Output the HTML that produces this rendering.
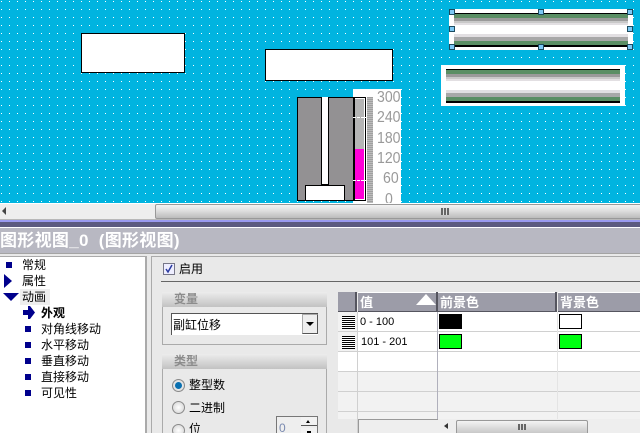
<!DOCTYPE html>
<html><head><meta charset="utf-8">
<style>
html,body{margin:0;padding:0;width:640px;height:433px;overflow:hidden;background:#e9e9e9}
body{position:relative;font-family:"Liberation Sans","WenQuanYi Zen Hei","Noto Sans CJK SC",sans-serif;font-size:12px;color:#000}
div,span,svg{position:absolute;box-sizing:border-box}
.t{white-space:nowrap;line-height:14px;font-size:12px}
.r{background:#fff;border:1px solid #000}
.h{width:6px;height:6px;background:#7cc8f4;border:1px solid #1c4c60}
.b{width:6px;height:6px;background:#00008c}
.gh{background:linear-gradient(#ececec,#c2c2c2);height:15px}
.gt{color:#8c8c8c;font-weight:bold;font-size:12px;line-height:15px;white-space:nowrap}
.th{background:#9c9ca8;color:#fff;font-weight:bold;font-size:13px;line-height:19px;height:20px;top:292px;white-space:nowrap;border-top:1px solid #fff;border-bottom:1px solid #55555f;padding-left:2px}
.sw{width:23px;height:15px;border:1px solid #000}
.rl{left:338px;width:302px;height:1px;background:#d0d0d0}
.ln{left:342px;width:13px;height:13px;background:repeating-linear-gradient(#000 0 1px,#fff 1px 2px)}
.rad{width:13px;height:13px;border-radius:50%;border:1px solid #8a8a8a;background:radial-gradient(#fff,#d0d0d0);left:172px}
.g{transform:scaleX(.88);transform-origin:left top}
</style></head><body>

<svg style="left:0;top:0" width="640" height="203">
<defs><pattern id="p" width="8" height="8" patternUnits="userSpaceOnUse" x="1" y="1"><rect width="1" height="1" fill="#fff"/></pattern></defs>
<rect width="640" height="203" fill="#00b4e0"/>
<rect width="640" height="203" fill="url(#p)"/>
</svg>

<div class="r" style="left:81px;top:33px;width:104px;height:40px"></div>
<div class="r" style="left:265px;top:49px;width:128px;height:32px"></div>

<div style="left:297px;top:97px;width:57px;height:104px;background:#939193;border:1px solid #000"></div>
<div style="left:321px;top:97px;width:8px;height:88px;background:#fff;border:1px solid #000;border-top:0"></div>
<div class="r" style="left:305px;top:185px;width:40px;height:16px"></div>

<div style="left:353px;top:89px;width:48px;height:114px;background:#fff"></div>
<div style="left:353px;top:97px;width:13px;height:104px;background:#fff;border:1px solid #000;border-left:2px solid #000"></div>
<div style="left:355px;top:99px;width:9px;height:50px;background:#b5b5b5"></div>
<div style="left:355px;top:149px;width:9px;height:50px;background:#ff00d8"></div>
<div style="left:353px;top:117px;width:14px;height:1px;background:repeating-linear-gradient(90deg,#fff 0 3px,transparent 3px 4px)"></div>
<div style="left:353px;top:180px;width:14px;height:1px;background:repeating-linear-gradient(90deg,#fff 0 3px,transparent 3px 4px)"></div>
<div style="left:367px;top:97px;width:6px;height:106px;background:repeating-linear-gradient(#a0a0a0 0 1px,#bcbcbc 1px 2px)"></div>
<div style="left:374px;top:89px;width:27px;height:114px;overflow:hidden;color:#999;font-size:16px;line-height:18px;font-family:'Liberation Sans',sans-serif">
<span class="g" style="left:3px;top:0">300</span><span class="g" style="left:3px;top:20px">240</span><span class="g" style="left:3px;top:41px">180</span><span class="g" style="left:3px;top:61px">120</span><span class="g" style="left:9px;top:81px">60</span><span class="g" style="left:11px;top:102px">0</span>
</div>

<div style="left:449px;top:9px;width:184px;height:41px;background:#fff"></div>
<div style="left:454px;top:13px;width:174px;height:34px;background:linear-gradient(#000 0 1px,#5a8e64 1px 5px,#9a9a9a 5px 8px,#c8c8c8 8px 10px,#e2dfe2 10px 12px,#fff 12px 21px,#e2dfe2 21px 24px,#a8a8a8 24px 28px,#5a8e64 28px 32px,#000 32px 34px)"></div>
<div class="h" style="left:449px;top:9px"></div><div class="h" style="left:538px;top:9px"></div><div class="h" style="left:627px;top:9px"></div>
<div class="h" style="left:449px;top:26px"></div><div class="h" style="left:627px;top:26px"></div>
<div class="h" style="left:449px;top:44px"></div><div class="h" style="left:538px;top:44px"></div><div class="h" style="left:627px;top:44px"></div>

<div style="left:441px;top:65px;width:184px;height:41px;background:#fff"></div>
<div style="left:446px;top:69px;width:174px;height:34px;background:linear-gradient(#000 0 1px,#5a8e64 1px 5px,#9a9a9a 5px 8px,#c8c8c8 8px 10px,#e2dfe2 10px 12px,#fff 12px 21px,#e2dfe2 21px 24px,#a8a8a8 24px 28px,#5a8e64 28px 32px,#000 32px 34px)"></div>

<div style="left:0;top:203px;width:640px;height:17px;background:#eee;border-top:1px solid #fff"></div>
<div style="left:2px;top:207px;width:0;height:0;border:4px solid transparent;border-right:4px solid #444;border-left:0"></div>
<div style="left:155px;top:204px;width:490px;height:15px;background:linear-gradient(#f4f4f4,#dedede 45%,#bcbcbc);border:1px solid #999;border-radius:2px"></div>
<div style="left:441px;top:208px;width:8px;height:7px;background:repeating-linear-gradient(90deg,#666 0 2px,#ddd 2px 3px)"></div>

<div style="left:0;top:219px;width:640px;height:2px;background:#b8b8b8"></div>
<div style="left:0;top:220px;width:640px;height:2px;background:#9a9af0"></div>
<div style="left:0;top:222px;width:640px;height:5px;background:#5c5a80"></div>
<div style="left:0;top:227px;width:640px;height:1px;background:#fff"></div>
<div style="left:0;top:228px;width:640px;height:26px;background:#b8b8c2;border-bottom:1px solid #a4a4a4"></div>
<div style="left:0;top:232px;font-size:17px;font-weight:bold;line-height:18px;color:#fff;white-space:nowrap;letter-spacing:.3px;word-spacing:5px">图形视图_0 (图形视图)</div>

<div style="left:0;top:256px;width:147px;height:177px;background:#fff;border-top:1px solid #aaa;border-right:2px solid #aaa"></div>
<div style="left:6px;top:262px" class="b"></div>
<div class="t" style="left:22px;top:258px">常规</div>
<div style="left:4px;top:274px;width:0;height:0;border:7px solid transparent;border-left:8px solid #00008c;border-right:0"></div>
<div class="t" style="left:22px;top:274px">属性</div>
<div style="left:3px;top:293px;width:0;height:0;border:7px solid transparent;border-top:8px solid #00008c;border-bottom:0;border-left-width:8px;border-right-width:8px"></div>
<div style="left:20px;top:289px;width:30px;height:16px;background:#eee"></div>
<div class="t" style="left:22px;top:290px">动画</div>
<svg style="left:23px;top:306px" width="12" height="13"><path d="M5 0h2l5 6.5-5 6.5H5V9H0V4h5z" fill="#00008c"/></svg>
<div class="t" style="left:41px;top:306px;font-weight:bold">外观</div>
<div class="b" style="left:25px;top:326px"></div><div class="t" style="left:41px;top:322px">对角线移动</div>
<div class="b" style="left:25px;top:342px"></div><div class="t" style="left:41px;top:338px">水平移动</div>
<div class="b" style="left:25px;top:358px"></div><div class="t" style="left:41px;top:354px">垂直移动</div>
<div class="b" style="left:25px;top:374px"></div><div class="t" style="left:41px;top:370px">直接移动</div>
<div class="b" style="left:25px;top:390px"></div><div class="t" style="left:41px;top:386px">可见性</div>

<div style="left:151px;top:256px;width:489px;height:177px;border-top:1px solid #aaa;border-left:1px solid #aaa;background:#e9e9e9"></div>
<div style="left:163px;top:263px;width:12px;height:12px;background:#eef;border:1px solid #778"></div>
<svg style="left:164px;top:264px" width="10" height="10"><path d="M2 5l2 3 4-7" fill="none" stroke="#2a3aa0" stroke-width="1.5"/></svg>
<div class="t" style="left:179px;top:262px">启用</div>
<div style="left:161px;top:281px;width:479px;height:1px;background:#666"></div>

<div style="left:162px;top:292px;width:165px;height:53px;border:1px solid #aaa;border-top:0"></div>
<div class="gh" style="left:162px;top:292px;width:165px"></div>
<div class="gt" style="left:174px;top:292px">变量</div>
<div style="left:171px;top:313px;width:147px;height:22px;background:#fff;border-left:1px solid #555;border-top:1px solid #555"></div>
<div class="t" style="left:173px;top:318px">副缸位移</div>
<div style="left:302px;top:314px;width:16px;height:20px;background:#eee;border:1px solid #aaa;border-right-color:#555;border-bottom-color:#555"></div>
<div style="left:306px;top:322px;width:0;height:0;border:4px solid transparent;border-top:4px solid #000;border-bottom:0"></div>

<div style="left:162px;top:354px;width:165px;height:79px;border-left:1px solid #aaa;border-right:1px solid #aaa"></div>
<div class="gh" style="left:162px;top:354px;width:165px"></div>
<div class="gt" style="left:174px;top:354px">类型</div>
<div class="rad" style="top:379px"></div>
<div style="left:175px;top:382px;width:7px;height:7px;border-radius:50%;background:#0a70b0"></div>
<div class="t" style="left:189px;top:378px">整型数</div>
<div class="rad" style="top:401px"></div>
<div class="t" style="left:189px;top:401px">二进制</div>
<div class="rad" style="top:424px"></div>
<div class="t" style="left:189px;top:422px">位</div>
<div style="left:276px;top:416px;width:42px;height:17px;background:#eee;border:1px solid #777;border-bottom:0"></div>
<div class="t" style="left:279px;top:421px;color:#7a8ab0">0</div>
<div style="left:301px;top:417px;width:16px;height:9px;background:#f2f2f2;border-bottom:1px solid #555"></div>
<div style="left:306px;top:420px;width:0;height:0;border:2px solid transparent;border-bottom:3px solid #000;border-top:0"></div>
<div style="left:301px;top:428px;width:16px;height:5px;background:#f2f2f2"></div>
<div style="left:307px;top:431px;width:4px;height:2px;background:#000"></div>

<div style="left:338px;top:312px;width:302px;height:60px;background:#fff"></div>
<div style="left:338px;top:372px;width:302px;height:47px;background:#f2f2f2"></div>
<div style="left:338px;top:312px;width:19px;height:40px;background:#f2f2f2"></div>
<div style="left:338px;top:292px;width:19px;height:20px;background:#9c9ca8;border-right:2px solid #55555f;border-bottom:1px solid #55555f"></div>
<div class="th" style="left:358px;width:80px">值</div>
<div style="left:416px;top:294px;width:0;height:0;border:10px solid transparent;border-bottom:11px solid #fff;border-top:0"></div>
<div style="left:436px;top:292px;width:2px;height:20px;background:#55555f"></div>
<div class="th" style="left:438px;width:119px">前景色</div>
<div style="left:555px;top:292px;width:2px;height:20px;background:#55555f"></div>
<div class="th" style="left:558px;width:82px">背景色</div>

<div class="rl" style="top:331px"></div><div class="rl" style="top:351px"></div><div class="rl" style="top:371px"></div><div class="rl" style="top:391px"></div><div class="rl" style="top:411px"></div>
<div style="left:357px;top:312px;width:1px;height:121px;background:#d0d0d0"></div>
<div style="left:437px;top:312px;width:1px;height:107px;background:#b0b0bc"></div>
<div style="left:557px;top:312px;width:1px;height:107px;background:#e4e4e4"></div>

<div class="ln" style="top:316px"></div>
<div class="ln" style="top:336px"></div>
<div class="t" style="left:360px;top:315px;font-size:11px">0 - 100</div>
<div class="t" style="left:361px;top:335px;font-size:11px">101 - 201</div>
<div class="sw" style="left:439px;top:314px;background:#000"></div>
<div class="sw" style="left:559px;top:314px;background:#fff"></div>
<div class="sw" style="left:439px;top:334px;background:#0f1"></div>
<div class="sw" style="left:559px;top:334px;background:#0f1"></div>

<div style="left:358px;top:419px;width:80px;height:14px;background:#eee;border-top:1px solid #999;border-left:1px solid #999"></div>
<div style="left:438px;top:419px;width:202px;height:14px;background:#eee"></div>
<div style="left:444px;top:423px;width:0;height:0;border:3px solid transparent;border-right:4px solid #333;border-left:0"></div>
<div style="left:456px;top:420px;width:132px;height:13px;background:linear-gradient(#f4f4f4,#c8c8c8);border:1px solid #999;border-bottom:0;border-radius:2px 2px 0 0"></div>
<div style="left:518px;top:424px;width:8px;height:6px;background:repeating-linear-gradient(90deg,#666 0 2px,#ddd 2px 3px)"></div>
</body></html>
